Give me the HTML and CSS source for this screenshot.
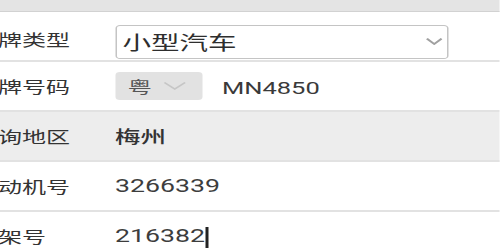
FILE: index.html
```html
<!DOCTYPE html>
<html lang="zh-CN">
<head>
<meta charset="utf-8">
<title>车辆查询</title>
<link rel="stylesheet" href="styles.css">
</head>
<body>
<div class="screen">
  <div class="topbar"></div>
  <div class="row row-first">
    <div class="label">号牌类型</div>
    <div class="select">
      <span class="select-text">小型汽车</span>
      <svg class="chev" width="11" height="7" viewBox="0 0 11 7"><polyline points="0.6,0.6 5.5,6 10.4,0.6"/></svg>
    </div>
  </div>
  <div class="row">
    <div class="label">号牌号码</div>
    <div class="prov">
      <span class="prov-text">粤</span>
      <svg class="chev chev-light" width="15" height="8" viewBox="0 0 15 8"><polyline points="0.6,0.6 7.5,7 14.4,0.6"/></svg>
    </div>
    <div class="plate">MN4850</div>
  </div>
  <div class="row row-gray">
    <div class="label">查询地区</div>
    <div class="value city">梅州</div>
  </div>
  <div class="row">
    <div class="label">发动机号</div>
    <div class="value">3266339</div>
  </div>
  <div class="row row-last">
    <div class="label">车架号</div>
    <div class="value">216382<span class="caret"></span></div>
  </div>
</div>
</body>
</html>
```
FILE: styles.css
```css
html, body {
  margin: 0;
  padding: 0;
  background: #ffffff;
  overflow: hidden;
}

body {
  width: 500px;
  height: 250px;
  font-family: "Roboto", "Noto Sans CJK SC", sans-serif;
  color: #333333;
}

.screen {
  width: 333.33px;
  transform: scaleX(1.5);
  transform-origin: 0 0;
}

.topbar {
  height: 11px;
  background: #e4e4e4;
  border-bottom: 1px solid #d2d2d2;
}

.row {
  display: flex;
  align-items: center;
  height: 48px;
  border-bottom: 2px solid #e2e2e2;
  box-sizing: content-box;
}

.row-gray {
  background: #ededed;
}

.row-last {
  border-bottom: none;
}

.label {
  flex: none;
  width: 94px;
  margin-left: -17.3px;
  font-family: "Noto Sans CJK SC", sans-serif;
  font-size: 16px;
  color: #333333;
  line-height: 20px;
}

.row-first .label {
  padding-top: 5px;
}

.select {
  flex: none;
  width: 222px;
  height: 34px;
  box-sizing: border-box;
  margin-top: 11px;
  border: 1px solid #c4c4c4;
  border-radius: 3px;
  display: flex;
  align-items: center;
  justify-content: space-between;
  padding: 0 3px 0 4px;
}

.select-text {
  font-family: "Noto Sans CJK SC", sans-serif;
  font-size: 19px;
  color: #2e2e2e;
  line-height: 24px;
}

.chev polyline {
  fill: none;
  stroke: #a0a0a0;
  stroke-width: 1.6;
}

.chev-light polyline {
  stroke: #c6c6c6;
  stroke-width: 1.4;
}

.prov {
  flex: none;
  width: 58px;
  height: 28px;
  box-sizing: border-box;
  background: #e2e2e2;
  border-radius: 3px;
  display: flex;
  align-items: center;
  gap: 8px;
  padding-left: 8.5px;
}

.prov-text {
  font-family: "Noto Sans CJK SC", sans-serif;
  font-size: 16px;
  color: #555555;
  line-height: 20px;
}

.plate {
  margin-left: 13.3px;
  font-size: 17px;
  color: #3a3a3a;
  padding-top: 3px;
}

.value {
  font-size: 17.8px;
  color: #3d3d3d;
  line-height: 22px;
  display: flex;
  align-items: center;
}

.city {
  font-family: "Noto Sans CJK SC", sans-serif;
  font-size: 17px;
  font-weight: 500;
  color: #333333;
}

.caret {
  display: inline-block;
  width: 1.4px;
  height: 21px;
  background: #222222;
  margin-left: 0.5px;
  margin-top: 2px;
}
```
